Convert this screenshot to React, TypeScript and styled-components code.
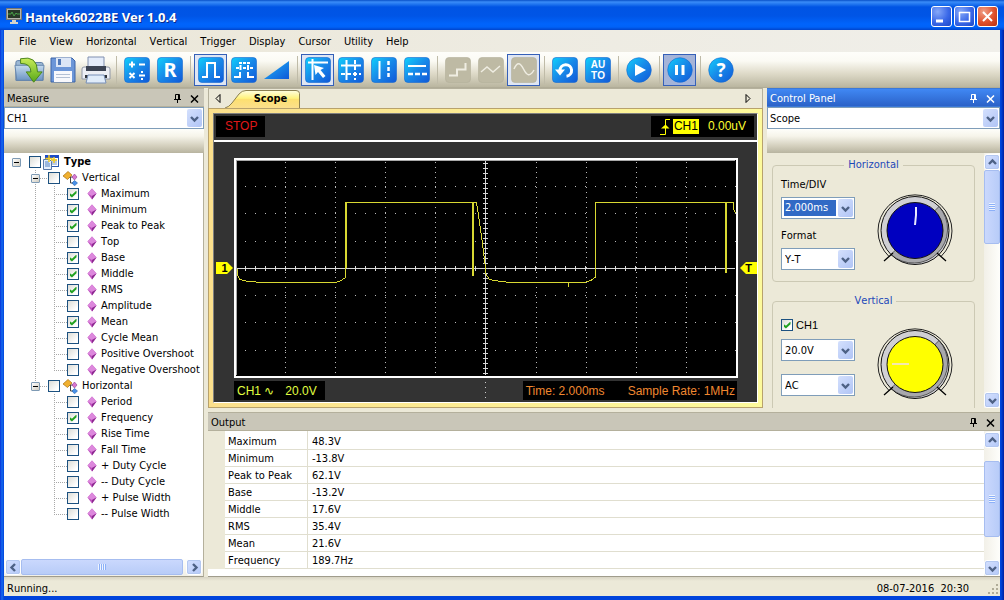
import React from 'react';
import styled, { createGlobalStyle, css } from 'styled-components';

const ui = '"DejaVu Sans Condensed", "DejaVu Sans", "Noto Sans", sans-serif';
const arial = '"Liberation Sans", Arial, sans-serif';

const GlobalStyle = createGlobalStyle`
  *, *::before, *::after { box-sizing: border-box; }
  body { margin: 0; font: 11px/14px ${ui}; font-kerning: none; color: #000; background: #ece9d8; overflow: hidden; }
  button, select, input { font: inherit; color: inherit; }
  ul { list-style: none; margin: 0; padding: 0; }
  svg { display: block; }
`;

/* ---------- window frame ---------- */
const Window = styled.div`
  display: flex;
  flex-direction: column;
  height: 100vh;
  background: linear-gradient(90deg, #0831d9 0, #166aee 2px, #0043dc 4px, #0043dc calc(100% - 3px), #001ea0 100%);
`;
const TitleBar = styled.header`
  display: flex;
  align-items: center;
  flex: none;
  height: 30px;
  padding: 2px 6px 0;
  background: linear-gradient(#0850c8 0, #3a8cf8 2px, #2277f0 4px, #0054e4 7px, #0055e6 16px, #0064fc 24px, #0062f8 27px, #0044cc 30px);
`;
const Title = styled.h1`
  flex: 1;
  margin: 2px 0 0 3px;
  color: #fff;
  font: bold 13px/18px "Noto Sans", ${ui};
  text-shadow: 1px 1px 0 #0a2a8c;
`;
const CaptionButtons = styled.div`
  display: flex;
  gap: 2px;
`;
const CaptionButton = styled.button<{ $danger?: boolean }>`
  width: 21px;
  height: 21px;
  padding: 0;
  border: 1px solid #fff;
  border-radius: 3px;
  background: ${p => (p.$danger
    ? 'radial-gradient(circle at 30% 25%, #f0a088, #e0502c 55%, #b83010)'
    : 'radial-gradient(circle at 30% 25%, #86a8f8, #3a68e8 55%, #1c48c8)')};
`;
const Client = styled.div`
  display: flex;
  flex-direction: column;
  flex: 1;
  min-height: 0;
  margin: 0 4px 4px;
  background: #ece9d8;
`;
const MenuBar = styled.nav`
  display: flex;
  flex: none;
  align-items: center;
  height: 22px;
  padding: 1px 0 0 9px;
  background: linear-gradient(90deg, #ebe7d8, #f0efea);
`;
const MenuItem = styled.button`
  padding: 0 7px 0 6px;
  border: 0;
  background: none;
`;
const Toolbar = styled.div`
  display: flex;
  flex: none;
  align-items: center;
  height: 36px;
  padding-left: 9px;
  background: linear-gradient(#fefefa 0, #fbfaf4 25%, #dedac8 60%, #bab6a0 97%, #a8a490 100%);
`;
const ToolButton = styled.button<{ $state?: 'on' | 'pressed' }>`
  display: grid;
  place-items: center;
  width: 33px;
  height: 32px;
  padding: 0;
  border: 1px solid transparent;
  background: none;
  ${p => p.$state && css`
    border-color: #3560b8;
    background: ${p.$state === 'on' ? '#dfe6f3' : '#a5b4d8'};
  `}
`;
const Separator = styled.span`
  width: 8px;
  height: 28px;
  background: linear-gradient(90deg, transparent 4px, #bfbba8 4px, #bfbba8 5px, transparent 5px);
`;

/* ---------- docking ---------- */
const Workspace = styled.main`
  display: grid;
  grid-template-columns: 200px minmax(0, 1fr);
  gap: 4px;
  flex: 1;
  min-height: 0;
`;
const Stack = styled.div`
  display: flex;
  flex-direction: column;
  gap: 4px;
  min-height: 0;
`;
const UpperRow = styled.div`
  display: grid;
  grid-template-columns: minmax(0, 1fr) 233px;
  gap: 4px;
  flex: 1;
  min-height: 0;
`;
const Panel = styled.section`
  display: flex;
  flex-direction: column;
  min-height: 0;
  min-width: 0;
`;
const OutputPanel = styled(Panel)`
  flex: none;
  height: 165px;
`;
const PanelTitle = styled.h2<{ $active?: boolean }>`
  display: flex;
  align-items: center;
  gap: 4px;
  flex: none;
  height: 19px;
  margin: 0;
  padding: 2px 3px 0;
  border: solid ${p => (p.$active ? '#3a78d8' : '#b4b09c')};
  border-width: 1px 0;
  font: 11px/14px ${ui};
  color: ${p => (p.$active ? '#fff' : '#000')};
  background: ${p => (p.$active ? 'linear-gradient(#4088f4, #2b62c8)' : '#c9c6b8')};
  span { flex: 1; }
`;
const PanelButton = styled.button`
  display: grid;
  place-items: center;
  width: 13px;
  height: 14px;
  padding: 0;
  border: 0;
  background: none;
`;
const PanelStrip = styled.div`
  flex: none;
  height: 24px;
  background: linear-gradient(#fefefa 0, #f6f4ea 30%, #d4d0be 70%, #b8b4a0 100%);
`;

/* ---------- drop-down ---------- */
const ComboFrame = styled.span`
  display: block;
  position: relative;
  flex: none;
  height: 22px;
  border: 1px solid #7f9db9;
  background: #fff;
`;
const ComboSelect = styled.select<{ $selected?: boolean; $inset: number }>`
  appearance: none;
  display: block;
  width: 100%;
  height: 100%;
  padding: 2px 18px 0 ${p => p.$inset}px;
  border: 0;
  outline: 0;
  background: none;
  ${p => p.$selected && css`
    color: #fff;
    border: 2px solid #fff;
    padding: 0 18px 0 1px;
    background: linear-gradient(90deg, #316ac5 calc(100% - 16px), transparent calc(100% - 16px));
  `}
`;
const ComboArrow = styled.span`
  position: absolute;
  top: 1px;
  right: 1px;
  bottom: 1px;
  display: grid;
  place-items: center;
  width: 15px;
  border-radius: 2px;
  background: linear-gradient(135deg, #d4e0fd, #b0c4f5);
  pointer-events: none;
`;
const Chevron = ({ turn = 0 }: { turn?: number }) => (
  <svg width="9" height="9" viewBox="0 0 9 9" fill="none">
    <path d="M1 3l3.5 3.5L8 3" stroke="#4d6185" strokeWidth="2.4" transform={`rotate(${turn} 4.5 4.5)`} />
  </svg>
);
type ComboProps = { label: string; value: string; selected?: boolean; id?: string; inset?: number };
const Combo = ({ label, value, selected, id, inset = 2 }: ComboProps) => (
  <ComboFrame>
    <ComboSelect id={id} aria-label={label} $selected={selected} $inset={inset}><option>{value}</option></ComboSelect>
    <ComboArrow><Chevron /></ComboArrow>
  </ComboFrame>
);

/* ---------- scroll bars ---------- */
const ScrollTrack = styled.div<{ $horizontal?: boolean }>`
  display: flex;
  flex: none;
  flex-direction: ${p => (p.$horizontal ? 'row' : 'column')};
  ${p => (p.$horizontal ? 'height: 17px; padding: 0 1px;' : 'width: 16px; padding: 1px 0 0;')}
  background: linear-gradient(${p => (p.$horizontal ? '0deg' : '90deg')}, #f2f0e8, #fefefb);
`;
const ScrollButton = styled.button`
  display: grid;
  place-items: center;
  flex: none;
  width: 16px;
  height: 16px;
  padding: 0;
  border: 1px solid #fff;
  outline: 1px solid #b4c8f0;
  outline-offset: -2px;
  border-radius: 3px;
  background: linear-gradient(135deg, #d4e0fe, #b4c8f8);
`;
const Thumb = styled.div<{ $horizontal?: boolean; $size: string }>`
  display: grid;
  place-items: center;
  flex: none;
  ${p => (p.$horizontal ? `width: ${p.$size}; height: 16px;` : `height: ${p.$size}; width: 16px;`)}
  border: 1px solid #a6bdf0;
  border-radius: 2px;
  background: linear-gradient(${p => (p.$horizontal ? '180deg' : '90deg')}, #cad8fd, #b8ccf8);
  &::after {
    content: '';
    ${p => (p.$horizontal ? 'width: 8px; height: 6px;' : 'width: 6px; height: 8px;')}
    background: repeating-linear-gradient(${p => (p.$horizontal ? '90deg' : '180deg')}, #eef4fe 0 1px, #8cb0f8 1px 2px);
  }
`;
const ScrollSpace = styled.div<{ $fixed?: number }>`
  flex: ${p => (p.$fixed !== undefined ? `0 0 ${p.$fixed}px` : 1)};
`;

/* ---------- measure tree ---------- */
const TreeBox = styled.div`
  display: flex;
  flex-direction: column;
  flex: 1;
  min-height: 0;
  border-right: 1px solid #b4b09c;
  border-bottom: 1px solid #a09c8c;
  background: #fff;
`;
const TreeScroll = styled.div`
  flex: 1;
  min-height: 0;
  padding-top: 1px;
  overflow: hidden;
`;
const dots = 'repeating-linear-gradient(#a8a8a8 0 1px, transparent 1px 2px)';
const Row = styled.div<{ $indent: number }>`
  display: flex;
  align-items: center;
  height: 16px;
  padding-left: ${p => p.$indent}px;
  white-space: nowrap;
`;
const Branch = styled.li`
  background: ${dots} 31px 0 / 1px 100% no-repeat;
  &:last-child { background-size: 1px 8px; }
`;
const Leaves = styled.ul`
  background: ${dots} 50px 0 / 1px calc(100% - 8px) no-repeat;
`;
const Stub = styled.span<{ $width: number; $blank?: boolean }>`
  width: ${p => p.$width}px;
  height: 1px;
  ${p => !p.$blank && 'background: repeating-linear-gradient(90deg, #a8a8a8 0 1px, transparent 1px 2px);'}
`;
const Expander = styled.button`
  display: grid;
  place-items: center;
  width: 9px;
  height: 9px;
  padding: 0;
  border: 1px solid #7e9ab4;
  border-radius: 1px;
  background: linear-gradient(135deg, #fff, #d0ccc0);
  &::after { content: ''; width: 5px; height: 1px; background: #000; }
`;
const Check = styled.input`
  appearance: none;
  display: grid;
  place-items: center;
  flex: none;
  width: 12px;
  height: 12px;
  margin: 0;
  border: 1px solid #1c5180;
  background: linear-gradient(135deg, #dcdcd6, #fff 80%);
  &:checked::after {
    content: '';
    width: 7px;
    height: 7px;
    background: #21a121;
    clip-path: polygon(0 35%, 0 70%, 35% 100%, 100% 40%, 100% 0, 35% 60%);
  }
`;
const NodeLabel = styled.label<{ $bold?: boolean }>`
  display: flex;
  align-items: center;
  gap: ${p => (p.$bold ? 5 : 4)}px;
  margin-left: ${p => (p.$bold ? 2 : 3)}px;
  ${p => p.$bold && 'font-weight: bold;'}
`;
const LeafLabel = styled(NodeLabel)`
  margin-left: 8px;
`;

const TypeIcon = () => (
  <svg width="16" height="16" viewBox="0 0 16 16">
    <rect x="2.5" y="1.5" width="13" height="11" fill="#fff" stroke="#2858b0" />
    <path d="M2 1h14v3H2z" fill="#1c4cc8" />
    <path d="M9 6h5M9 8h5M9 10h5" stroke="#7090c8" />
    <path d="M.5 5.500h6l2 2v8h-8z" fill="#e4eefc" stroke="#5878a8" />
    <path d="M2 8h4M2 10h5M2 12h5" stroke="#5080c0" />
    <path d="M6 1v7M2.500 4.500h7M11 3v6M8 6h6" stroke="#f4cc20" strokeWidth="1.500" />
  </svg>
);
const GroupIcon = () => (
  <svg width="15" height="15" viewBox="0 0 15 15">
    <path d="M6 6h4M7.500 6v6h3" stroke="#444" fill="none" />
    <path d="M5 .5L9 4 4.500 8.500 0 5z" fill="#f0b030" stroke="#a87010" strokeWidth=".7" />
    <path d="M11.500 3l2.500 3-2.500 3L9 6z" fill="#d878d0" stroke="#8c3c90" strokeWidth=".6" />
    <path d="M11.500 9.500l3 2.500-3 2.800L9 12z" fill="#4890e8" stroke="#2060a8" strokeWidth=".6" />
  </svg>
);
const LeafIcon = () => (
  <svg width="10" height="12" viewBox="0 0 10 12">
    <path d="M5 .5L9.500 5.500 5 11.500 .5 5.500z" fill="#c050c0" />
    <path d="M5 .5L9.500 5.500 5 8 .5 5.500z" fill="#dc88dc" />
    <path d="M5 8l4.500-2.500-4.500 6z" fill="#8c2c90" />
  </svg>
);

const tree: { name: string; items: [string, boolean][] }[] = [
  {
    name: 'Vertical',
    items: [
      ['Maximum', true], ['Minimum', true], ['Peak to Peak', true], ['Top', false], ['Base', true], ['Middle', true],
      ['RMS', true], ['Amplitude', false], ['Mean', true], ['Cycle Mean', false], ['Positive Overshoot', false],
      ['Negative Overshoot', false],
    ],
  },
  {
    name: 'Horizontal',
    items: [
      ['Period', false], ['Frequency', true], ['Rise Time', false], ['Fall Time', false], ['+ Duty Cycle', false],
      ['-- Duty Cycle', false], ['+ Pulse Width', false], ['-- Pulse Width', false],
    ],
  },
];

/* ---------- scope ---------- */
const TabStrip = styled.div`
  display: flex;
  align-items: stretch;
  flex: none;
  height: 20px;
  padding: 0 9px 0 3px;
  border: 1px solid #b4b09c;
  border-bottom: 0;
`;
const TabArrow = styled.button`
  display: grid;
  place-items: center;
  width: 11px;
  padding: 0;
  border: 0;
  background: none;
`;
const Tab = styled.button`
  position: relative;
  width: 75px;
  margin: 1px auto 0 2px;
  padding: 0 0 0 16px;
  border: 0;
  background: none;
  font-weight: bold;
  svg { position: absolute; inset: 0; }
  span { position: relative; }
`;
const TabPage = styled.div`
  display: flex;
  flex: 1;
  min-height: 0;
  padding: 4px;
  border: 1px solid #b8a26c;
  background: linear-gradient(90deg, #fbdf8c, #fdfa9c);
`;
const Scope = styled.div`
  display: flex;
  flex-direction: column;
  flex: 1;
  min-width: 0;
  border: 1px solid #808080;
  border-right-color: #fff;
  border-bottom-color: #fff;
  background: #333;
  font: 12px/15px ${arial};
`;
const ScopeHeader = styled.div`
  display: flex;
  justify-content: space-between;
  flex: none;
  height: 28px;
  padding: 2px 3px 3px 2px;
  border-bottom: 2px solid #fff;
`;
const Readout = styled.div<{ $color: string; $gap?: number }>`
  display: flex;
  align-items: center;
  gap: ${p => p.$gap || 0}px;
  padding: 0 8px 0 9px;
  background: #000;
  color: ${p => p.$color};
`;
const Source = styled.span`
  padding: 0 1px;
  margin: 0 9px 0 3px;
  background: #ff0;
  color: #000;
`;
const PlotRow = styled.div`
  display: grid;
  grid-template-columns: 20px minmax(0, 1fr) 19px;
  align-items: center;
  flex: 1;
  min-height: 0;
  margin-top: 16px;
`;
const Plot = styled.svg`
  width: 100%;
  height: 100%;
  background: #000;
`;
const Marker = styled.span<{ $side: 'left' | 'right' }>`
  justify-self: ${p => (p.$side === 'left' ? 'start' : 'end')};
  width: 17px;
  height: 12px;
  margin-left: ${p => (p.$side === 'left' ? 2 : 0)}px;
  padding: 0 5px;
  background: #ff0;
  color: #000;
  font: bold 11px/12px ${arial};
  text-align: center;
  clip-path: ${p => (p.$side === 'left'
    ? 'polygon(0 0, 65% 0, 100% 50%, 65% 100%, 0 100%)'
    : 'polygon(35% 0, 100% 0, 100% 100%, 35% 100%, 0 50%)')};
`;
const ScopeFooter = styled.div`
  display: flex;
  justify-content: space-between;
  flex: none;
  height: 24px;
  margin: 0 20px;
  padding: 3px 0 2px;
  background: repeating-linear-gradient(transparent 0 4px, #ccc 4px 5px) center / 1px 100% no-repeat;
  ${Readout} { padding: 1px 2px 0 3px; }
`;

const majorX = [51, 101, 151, 201, 302, 352, 402, 452];
const majorY = [28, 55, 83, 137, 164, 192];
const every = (from: number, to: number, step: number) =>
  Array.from({ length: Math.floor((to - from) / step) + 1 }, (_, i) => from + i * step);

const ScopePlot = () => (
  <Plot viewBox="0 0 504 220" preserveAspectRatio="none" shapeRendering="crispEdges" aria-label="Waveform">
    <g stroke="#b8b8b8" fill="none">
      {majorX.map(x => <path key={x} d={`M${x + 0.5} 4V217`} strokeDasharray="1 4" />)}
      {majorY.map(y => <path key={y} d={`M11 ${y + 0.5}H502`} strokeDasharray="1 9" />)}
      <path d="M3 110.5H501M251.5 3V217" stroke="#d8d8d8" />
      <path d={every(11, 500, 10).map(x => `M${x + 0.5} 108v5`).join('')} stroke="#d8d8d8" />
      <path d={every(5, 216, 5).map(y => `M249 ${y + 0.5}h5`).join('')} stroke="#d8d8d8" />
    </g>
    <path
      d="M3.500 111V117L5.500 121 9 122.500 15 123.500 28 124.500H101L106 123 111 120V45M112.500 110V44.500H242.500L245.500 64 248.500 86 251 106 252 116 255 121 260 122.500 276 124.500H350L357 122.500 361.500 119V44.500H499L500 52 501.500 55M334 124V129"
      fill="none" stroke="#d8d832" strokeWidth="1"
    />
    <path d="M112 44V110M239 44V118M492 44V115" stroke="#d8d832" strokeWidth="2" />
    <rect x="1" y="1" width="502" height="218" fill="none" stroke="#fff" strokeWidth="2" />
    <path d="M2.500 217V2.500H501" fill="none" stroke="#a8a8a8" />
  </Plot>
);

/* ---------- control panel ---------- */
const ControlBody = styled.div`
  display: flex;
  flex: 1;
  min-height: 0;
`;
const Groups = styled.div`
  display: flex;
  flex-direction: column;
  gap: 12px;
  flex: 1;
  min-width: 0;
  padding: 5px 9px 0 5px;
  overflow: hidden;
`;
const Group = styled.fieldset`
  flex: none;
  min-width: 0;
  margin: 0;
  padding: 6px 8px 11px;
  border: 1px solid #ccc9b4;
  border-radius: 4px;
  legend { margin: 0 auto; padding: 0 4px; color: #1c48b8; }
`;
const GroupColumns = styled.div`
  display: grid;
  grid-template-columns: 74px 1fr;
`;
const Field = styled.div`
  display: flex;
  flex-direction: column;
  gap: 5px;
  & + & { margin-top: 10px; }
`;
const ChannelField = styled.div`
  display: flex;
  flex-direction: column;
  gap: 13px;
`;
const CheckLabel = styled.label`
  display: flex;
  align-items: center;
  gap: 3px;
  height: 22px;
  margin-bottom: 3px;
  font-family: ${arial};
`;
const DialCell = styled.div<{ $top: number }>`
  display: grid;
  justify-items: center;
  align-content: start;
  padding: ${p => p.$top}px 0 0 9px;
`;
const Dial = ({ color, hand, handColor }: { color: string; hand: string; handColor: string }) => (
  <svg width="76" height="74" viewBox="0 0 76 74">
    <path d="M12 63.500A37 36 0 1 1 64 63.500" fill="none" stroke="#222" />
    <circle cx="38" cy="37.500" r="34" fill="#d0d0d4" stroke="#111" />
    <path d="M62 13.500A34 34 0 0 1 14 61.500z" fill="#a8a8ac" stroke="#111" strokeWidth=".6" />
    <path d="M7 68L16 60M69 68L60 60" stroke="#000" strokeWidth="1.300" />
    <circle cx="38" cy="37.500" r="28" fill={color} stroke="#111" />
    <path d={hand} stroke={handColor} strokeWidth="2" fill="none" />
  </svg>
);

/* ---------- output ---------- */
const OutputBody = styled.div`
  display: flex;
  flex: 1;
  min-height: 0;
  border-bottom: 1px solid #a09c8c;
  background: #fff;
`;
const OutputScroll = styled.div`
  flex: 1;
  min-width: 0;
  overflow: hidden;
`;
const Table = styled.table`
  width: 100%;
  border-spacing: 0;
  table-layout: fixed;
`;
const Gutter = styled.td`
  width: 17px;
  padding: 0;
  background: #ece9d8;
`;
const Cell = styled.td<{ $name?: boolean }>`
  height: 17px;
  padding: 2px 3px 0 ${p => (p.$name ? 3 : 4)}px;
  line-height: 14px;
  ${p => p.$name && 'width: 83px; border-right: 1px solid #e0decf;'}
  border-bottom: 1px solid #e0decf;
  tr:first-child > & { height: 19px; padding-top: 4px; }
`;
const readings = [
  ['Maximum', '48.3V'], ['Minimum', '-13.8V'], ['Peak to Peak', '62.1V'], ['Base', '-13.2V'],
  ['Middle', '17.6V'], ['RMS', '35.4V'], ['Mean', '21.6V'], ['Frequency', '189.7Hz'],
];

const StatusBar = styled.footer`
  display: flex;
  justify-content: space-between;
  align-items: center;
  flex: none;
  height: 19px;
  padding: 4px 1px 0 3px;
  background: linear-gradient(#d8d4c4, #ece9d8 4px, #ece9d8);
`;
const Clock = styled.div`
  display: flex;
  align-items: center;
  gap: 18px;
`;

/* ---------- icons ---------- */
const Defs = () => (
  <svg width="0" height="0" aria-hidden="true">
    <defs>
      <linearGradient id="blue" x1="0" y1="0" x2="1" y2="1">
        <stop offset="0" stopColor="#10d0fc" /><stop offset=".5" stopColor="#1888e8" /><stop offset="1" stopColor="#1058d8" />
      </linearGradient>
      <linearGradient id="folder" x1="0" y1="0" x2="0" y2="1">
        <stop offset="0" stopColor="#c4daee" /><stop offset="1" stopColor="#6c94c4" />
      </linearGradient>
      <linearGradient id="arrow" x1="0" y1="0" x2="0" y2="1">
        <stop offset="0" stopColor="#c8ec58" /><stop offset="1" stopColor="#58a818" />
      </linearGradient>
      <linearGradient id="tab" x1="0" y1="0" x2="0" y2="1">
        <stop offset="0" stopColor="#fffee0" /><stop offset=".45" stopColor="#fff27c" /><stop offset=".5" stopColor="#fde070" /><stop offset="1" stopColor="#fbdf8c" />
      </linearGradient>
    </defs>
  </svg>
);
const Tile = ({ d, children, gray, width = 2 }: { d?: string; children?: React.ReactNode; gray?: boolean; width?: number }) => (
  <svg width="26" height="26" viewBox="0 0 26 26">
    <rect x=".5" y=".5" width="25" height="25" rx="3.500" fill={gray ? '#bebaa4' : 'url(#blue)'} stroke={gray ? '#b4b09a' : '#1468d0'} strokeWidth=".6" />
    <path d={d} fill="none" stroke={gray ? '#efede2' : '#fff'} strokeWidth={width} />
    {children}
  </svg>
);
const Round = ({ children }: { children: React.ReactNode }) => (
  <svg width="26" height="26" viewBox="0 0 26 26">
    <circle cx="13" cy="13" r="12.300" fill="url(#blue)" stroke="#1468d0" strokeWidth=".6" />
    {children}
  </svg>
);
const glyph = { fill: '#fff', fontWeight: 'bold', textAnchor: 'middle' as const, fontFamily: '"Noto Sans", "DejaVu Sans", sans-serif' };
const smallGlyph = { ...glyph, fontSize: 10, fontFamily: arial };

type Tool = { name: string; icon: React.ReactNode; state?: 'on' | 'pressed' } | null;
const tools: Tool[] = [
  {
    name: 'Open', icon: (
      <svg width="31" height="28" viewBox="0 0 33 28">
        <path d="M2 25V6q0-2 2-2h6l2 2h17q2 0 2 2v17z" fill="#9cb8d4" stroke="#5c7ca4" />
        <path d="M1 9h31l-1.500 16H3z" fill="url(#folder)" stroke="#6484ac" />
        <path d="M7 2q18-4 18 14h5l-9 11-8-11h5Q18 7 7 7z" fill="url(#arrow)" stroke="#48801c" />
      </svg>
    ),
  },
  {
    name: 'Save', icon: (
      <svg width="26" height="26" viewBox="0 0 26 26">
        <path d="M1 1h21l3 3v21H1z" fill="#6c96d8" stroke="#3c64a8" />
        <path d="M6 1h15v9H6z" fill="#dce6f6" /><path d="M8 2h3v6H8z" fill="#5078b8" />
        <path d="M4 14h18v11H4z" fill="#f8f8fc" /><path d="M6 17.500h14M6 20.500h14" stroke="#b4c0d4" />
      </svg>
    ),
  },
  {
    name: 'Print', icon: (
      <svg width="30" height="28" viewBox="0 0 30 28">
        <path d="M7 1h16v12H7z" fill="#e4ecfa" stroke="#8090b0" />
        <path d="M3 11h24q2 0 2 2v10H1V13q0-2 2-2z" fill="#eceef4" stroke="#9098a8" />
        <path d="M5 10h20v5H5z" fill="#3c4454" /><path d="M4 19h22v3H4z" fill="#30343c" />
        <path d="M7 19h16l2 8H5z" fill="#e0ecfa" stroke="#7890b8" />
      </svg>
    ),
  },
  null,
  { name: 'Math', icon: <Tile d="M5 7.500h6M8 4.500v6M15 7.500h6M5.500 16l5 5M10.500 16l-5 5M15 18.500h6M17 15h2M17 22h2" /> },
  { name: 'Reference', icon: <Tile><text x="13" y="20" fontSize="20" {...glyph}>R</text></Tile> },
  null,
  { name: 'Pulse', state: 'on', icon: <Tile d="M4 20h5V6h8v14h5" /> },
  { name: 'Double pulse', icon: <Tile d="M8 6h3M12 6h3M16 6h3M5 11h3M9.500 8v5M17 8v5M12 11h3M19 11h3M3 20h6v-5M23 20h-6v-5" /> },
  { name: 'Ramp', icon: <svg width="26" height="26" viewBox="0 0 26 26"><path d="M0 22L25 4v18z" fill="url(#blue)" /></svg> },
  null,
  { name: 'Cursor cross', state: 'on', icon: <Tile d="M3 5.500h20M7.500 2v21"><path d="M9 8l10 3-3.500 2 5 6-2.500 2-5-6-2.500 3z" fill="#fff" /></Tile> },
  { name: 'Cursor grid', icon: <Tile d="M3 8.500h20M8.500 3v20" width={2}><path d="M17 3v20M3 17h20" stroke="#fff" strokeWidth="2" strokeDasharray="4 2" /></Tile> },
  { name: 'Vertical cursor', icon: <Tile d="M8.500 4v18"><path d="M17.500 4v18" stroke="#fff" strokeWidth="2.500" strokeDasharray="4 2" /></Tile> },
  { name: 'Horizontal cursor', icon: <Tile d="M4 9h18"><path d="M4 17h19" stroke="#fff" strokeWidth="2.500" strokeDasharray="5 2" /></Tile> },
  null,
  { name: 'Step', icon: <Tile gray d="M4 18.500h8v-6h8.500V6" /> },
  { name: 'Linear', icon: <Tile gray d="M3 15l6-5 6 5 7-6" width={1.5} /> },
  { name: 'Sine', state: 'on', icon: <Tile gray d="M3 12C6 5 9 5 12.500 12S19 20 23 13" width={1.5} /> },
  null,
  { name: 'Undo', icon: <Tile d="M8 13.500a5.800 5.800 0 1 1 6.500 5.700" width={3}><path d="M3 12.500h10l-5 6z" fill="#fff" /></Tile> },
  { name: 'Auto', icon: <Tile><text x="13" y="11" {...smallGlyph}>AU</text><text x="13" y="22" {...smallGlyph}>TO</text></Tile> },
  null,
  { name: 'Run', icon: <Round><path d="M9 7l11 6-11 6z" fill="#fff" /></Round> },
  null,
  { name: 'Pause', state: 'pressed', icon: <Round><path d="M9.500 8v10M16 8v10" stroke="#fff" strokeWidth="3" /></Round> },
  null,
  { name: 'About', icon: <Round><text x="13" y="19.500" fontSize="19" {...glyph}>?</text></Round> },
];

const TitleTools = () => (
  <>
    <PanelButton aria-label="Pin">
      <svg width="9" height="9" viewBox="0 0 9 9" fill="none" stroke="currentColor"><path d="M2.500 5V.5h4V5M1 5.500h7M4.500 6v3M5.500 1v4" /></svg>
    </PanelButton>
    <PanelButton aria-label="Close">
      <svg width="9" height="8" viewBox="0 0 9 8" fill="none" stroke="currentColor" strokeWidth="1.500"><path d="M1 .5l7 7M8 .5l-7 7" /></svg>
    </PanelButton>
  </>
);

export default function App() {
  return (
    <Window>
      <GlobalStyle />
      <Defs />
      <TitleBar>
        <svg width="16" height="16" viewBox="0 0 16 16">
          <path d="M.5.500h15v11H.5z" fill="#b4b4ac" stroke="#787870" />
          <path d="M2 2h12v8H2z" fill="#283828" /><path d="M2 6h3l1-2 2 4 2-3 1 1h3" stroke="#48a048" fill="none" />
          <path d="M6 12h4v2h2v2H4v-2h2z" fill="#d4d4cc" />
        </svg>
        <Title>Hantek6022BE Ver 1.0.4</Title>
        <CaptionButtons>
          <CaptionButton aria-label="Minimize"><svg width="19" height="19"><path d="M4 14h7" stroke="#fff" strokeWidth="3" /></svg></CaptionButton>
          <CaptionButton aria-label="Maximize"><svg width="19" height="19"><path d="M4.500 5v9.500h10V5M4 5.500h11" fill="none" stroke="#fff" strokeWidth="1.500" /></svg></CaptionButton>
          <CaptionButton aria-label="Close window" $danger><svg width="19" height="19"><path d="M5 5l9 9M14 5l-9 9" stroke="#fff" strokeWidth="2" /></svg></CaptionButton>
        </CaptionButtons>
      </TitleBar>
      <Client>
        <MenuBar>
          {['File', 'View', 'Horizontal', 'Vertical', 'Trigger', 'Display', 'Cursor', 'Utility', 'Help'].map(m => <MenuItem key={m}>{m}</MenuItem>)}
        </MenuBar>
        <Toolbar role="toolbar">
          {tools.map((t, i) => (t
            ? <ToolButton key={t.name} aria-label={t.name} $state={t.state}>{t.icon}</ToolButton>
            : <Separator key={i} />))}
        </Toolbar>
        <Workspace>
          <Panel>
            <PanelTitle><span>Measure</span><TitleTools /></PanelTitle>
            <Combo label="Measured channel" value="CH1" />
            <PanelStrip />
            <TreeBox>
              <TreeScroll>
                <Row $indent={8}>
                  <Expander aria-label="Collapse Type" />
                  <Stub $width={8} $blank />
                  <Check type="checkbox" id="type" />
                  <NodeLabel htmlFor="type" $bold><TypeIcon />Type</NodeLabel>
                </Row>
                <ul>
                  {tree.map(group => (
                    <Branch key={group.name}>
                      <Row $indent={27}>
                        <Expander aria-label={`Collapse ${group.name}`} />
                        <Stub $width={8} />
                        <Check type="checkbox" id={group.name} />
                        <NodeLabel htmlFor={group.name}><GroupIcon />{group.name}</NodeLabel>
                      </Row>
                      <Leaves>
                        {group.items.map(([name, on]) => (
                          <li key={name}>
                            <Row $indent={50}>
                              <Stub $width={13} />
                              <Check type="checkbox" id={name} defaultChecked={on} />
                              <LeafLabel htmlFor={name}><LeafIcon />{name}</LeafLabel>
                            </Row>
                          </li>
                        ))}
                      </Leaves>
                    </Branch>
                  ))}
                </ul>
              </TreeScroll>
              <ScrollTrack $horizontal>
                <ScrollButton aria-label="Scroll left"><Chevron turn={90} /></ScrollButton>
                <Thumb $horizontal $size="162px" />
                <ScrollSpace />
                <ScrollButton aria-label="Scroll right"><Chevron turn={-90} /></ScrollButton>
              </ScrollTrack>
            </TreeBox>
          </Panel>
          <Stack>
            <UpperRow>
              <Panel>
                <TabStrip>
                  <TabArrow aria-label="Previous tab"><svg width="6" height="9" viewBox="0 0 6 9"><path d="M5 .5v8L1 4.500z" fill="none" stroke="#000" /></svg></TabArrow>
                  <Tab>
                    <svg width="75" height="18" viewBox="0 0 75 18"><path d="M0 18Q4 17 7 13L14 4Q17 .5 21 .5H71q3.500 0 3.500 3V18" fill="url(#tab)" stroke="#8c8050" /></svg>
                    <span>Scope</span>
                  </Tab>
                  <TabArrow aria-label="Next tab"><svg width="6" height="9" viewBox="0 0 6 9"><path d="M1 .5v8l4-4z" fill="none" stroke="#000" /></svg></TabArrow>
                </TabStrip>
                <TabPage>
                  <Scope>
                    <ScopeHeader>
                      <Readout $color="#e01818">STOP</Readout>
                      <Readout $color="#ffff30">
                        <svg width="10" height="18" viewBox="0 0 10 18"><path d="M0 16.500h5.500v-15H10" fill="none" stroke="#ff0" /><path d="M1 10.500l4.500-4 4 4z" fill="#ff0" /></svg>
                        <Source>CH1</Source>
                        0.00uV
                      </Readout>
                    </ScopeHeader>
                    <PlotRow>
                      <Marker $side="left">1</Marker>
                      <ScopePlot />
                      <Marker $side="right">T</Marker>
                    </PlotRow>
                    <ScopeFooter>
                      <Readout $color="#e0ff40" $gap={11}>
                        <span>CH1 ∿</span>
                        <span>20.0V&nbsp;&nbsp;</span>
                      </Readout>
                      <Readout $color="#f08830" $gap={23}>
                        <span>Time: 2.000ms</span>
                        <span>Sample Rate: 1MHz</span>
                      </Readout>
                    </ScopeFooter>
                  </Scope>
                </TabPage>
              </Panel>
              <Panel>
                <PanelTitle $active><span>Control Panel</span><TitleTools /></PanelTitle>
                <Combo label="Control page" value="Scope" />
                <PanelStrip />
                <ControlBody>
                  <Groups>
                    <Group>
                      <legend>Horizontal</legend>
                      <GroupColumns>
                        <div>
                          <Field><label htmlFor="timediv">Time/DIV</label><Combo id="timediv" label="Time/DIV" value="2.000ms" selected /></Field>
                          <Field><label htmlFor="format">Format</label><Combo id="format" label="Format" value="Y-T" inset={3} /></Field>
                        </div>
                        <DialCell $top={15}><Dial color="#0000c0" hand="M39 14V22L38 32" handColor="#e8e8ff" /></DialCell>
                      </GroupColumns>
                    </Group>
                    <Group>
                      <legend>Vertical</legend>
                      <GroupColumns>
                        <div>
                          <CheckLabel><Check type="checkbox" defaultChecked />CH1</CheckLabel>
                          <ChannelField>
                            <Combo label="Volts per division" value="20.0V" inset={3} />
                            <Combo label="Coupling" value="AC" inset={3} />
                          </ChannelField>
                        </div>
                        <DialCell $top={13}><Dial color="#ffff00" hand="M15 37H32" handColor="#f4e8b0" /></DialCell>
                      </GroupColumns>
                    </Group>
                  </Groups>
                  <ScrollTrack>
                    <ScrollButton aria-label="Scroll controls up"><Chevron turn={180} /></ScrollButton>
                    <Thumb $size="74px" />
                    <ScrollSpace />
                    <ScrollButton aria-label="Scroll controls down"><Chevron /></ScrollButton>
                  </ScrollTrack>
                </ControlBody>
              </Panel>
            </UpperRow>
            <OutputPanel>
              <PanelTitle><span>Output</span><TitleTools /></PanelTitle>
              <OutputBody>
                <OutputScroll>
                  <Table>
                    <tbody>
                      {readings.map(([name, value]) => (
                        <tr key={name}><Gutter /><Cell $name>{name}</Cell><Cell>{value}</Cell></tr>
                      ))}
                    </tbody>
                  </Table>
                </OutputScroll>
                <ScrollTrack>
                  <ScrollButton aria-label="Scroll output up"><Chevron turn={180} /></ScrollButton>
                  <ScrollSpace $fixed={13} />
                  <Thumb $size="76px" />
                  <ScrollSpace />
                  <ScrollButton aria-label="Scroll output down"><Chevron /></ScrollButton>
                </ScrollTrack>
              </OutputBody>
            </OutputPanel>
          </Stack>
        </Workspace>
        <StatusBar>
          <span>Running...</span>
          <Clock>
            <span>08-07-2016&nbsp; 20:30</span>
            <svg width="12" height="12" viewBox="0 0 12 12" fill="#b0ac98"><path d="M9 1h2v2H9zM9 5h2v2H9zM5 5h2v2H5zM9 9h2v2H9zM5 9h2v2H5zM1 9h2v2H1z" /></svg>
          </Clock>
        </StatusBar>
      </Client>
    </Window>
  );
}
